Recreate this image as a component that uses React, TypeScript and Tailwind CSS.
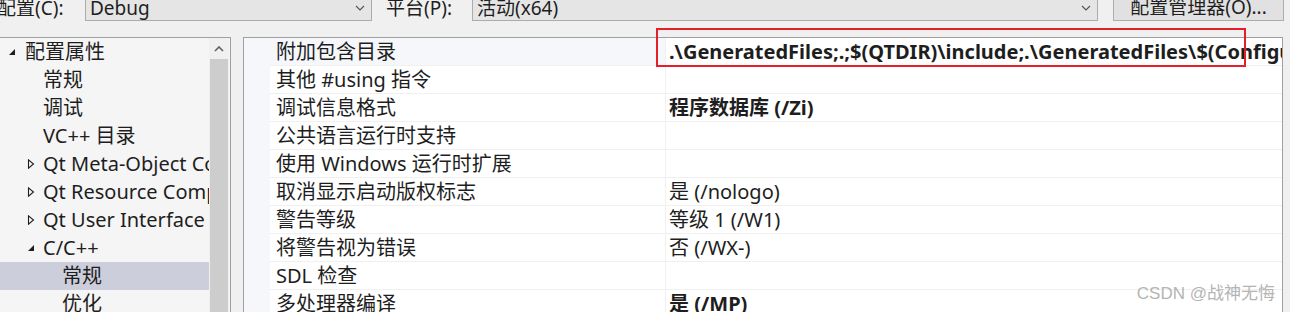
import React from "react";

type TreeItem = {
  label: string;
  level: number;
  arrow?: "open" | "closed";
  selected?: boolean;
};

const treeItems: TreeItem[] = [
  { label: "配置属性", level: 0, arrow: "open" },
  { label: "常规", level: 1 },
  { label: "调试", level: 1 },
  { label: "VC++ 目录", level: 1 },
  { label: "Qt Meta-Object Compiler", level: 1, arrow: "closed" },
  { label: "Qt Resource Compiler", level: 1, arrow: "closed" },
  { label: "Qt User Interface Compiler", level: 1, arrow: "closed" },
  { label: "C/C++", level: 1, arrow: "open" },
  { label: "常规", level: 2, selected: true },
  { label: "优化", level: 2 },
];

type PropRow = { name: string; value?: string; bold?: boolean; active?: boolean };

const propRows: PropRow[] = [
  {
    name: "附加包含目录",
    value: ".\\GeneratedFiles;.;$(QTDIR)\\include;.\\GeneratedFiles\\$(ConfigurationName);$(QTDIR)\\include\\QtCore",
    bold: true,
    active: true,
  },
  { name: "其他 #using 指令" },
  { name: "调试信息格式", value: "程序数据库 (/Zi)", bold: true },
  { name: "公共语言运行时支持" },
  { name: "使用 Windows 运行时扩展" },
  { name: "取消显示启动版权标志", value: "是 (/nologo)" },
  { name: "警告等级", value: "等级 1 (/W1)" },
  { name: "将警告视为错误", value: "否 (/WX-)" },
  { name: "SDL 检查" },
  { name: "多处理器编译", value: "是 (/MP)", bold: true },
];

function ChevronDown() {
  return (
    <svg width="10" height="6" viewBox="0 0 10 6" className="shrink-0">
      <polyline points="1,1 5,5 9,1" fill="none" stroke="#555" strokeWidth="1.2" />
    </svg>
  );
}

function Arrow({ kind }: { kind: "open" | "closed" }) {
  if (kind === "open") {
    return (
      <svg width="8" height="8" viewBox="0 0 8 8">
        <polygon points="7,1 7,7 1,7" fill="#1e1e1e" />
      </svg>
    );
  }
  return (
    <svg width="8" height="10" viewBox="0 0 8 10">
      <polygon points="1.5,0.8 6.5,5 1.5,9.2" fill="none" stroke="#1e1e1e" strokeWidth="1.1" />
    </svg>
  );
}

function ComboBox({ text, className }: { text: string; className: string }) {
  return (
    <div
      className={`flex h-[26px] items-center justify-between border border-[#acacac] bg-[#e5e5e5] pl-[4px] pr-[6px] ${className}`}
    >
      <span className="whitespace-nowrap leading-none">{text}</span>
      <ChevronDown />
    </div>
  );
}

function TreeRow({ item }: { item: TreeItem }) {
  // indent: level 0 text at 25px, level 1 at 43px, level 2 at 62px
  const textLeft = item.level === 0 ? "pl-[25px]" : item.level === 1 ? "pl-[43px]" : "pl-[62px]";
  const arrowLeft = item.level === 0 ? "left-[8px]" : "left-[27px]";
  return (
    <div
      className={`relative flex h-[28px] shrink-0 items-center overflow-hidden ${textLeft} ${
        item.selected ? "bg-[#cccedb]" : ""
      }`}
    >
      {item.arrow && (
        <span className={`absolute top-[9px] ${arrowLeft} flex h-[10px] items-center`}>
          <Arrow kind={item.arrow} />
        </span>
      )}
      <span className="min-w-0 overflow-hidden whitespace-nowrap">{item.label}</span>
    </div>
  );
}

function PropertyRow({ row }: { row: PropRow }) {
  return (
    <div className="flex h-[28px] shrink-0 border-b border-[#f0f0f0]">
      <div
        className={`flex w-[396px] shrink-0 items-center border-r border-[#f0f0f0] pl-[6px] ${
          row.active ? "bg-[#f5f7fb]" : "bg-white"
        }`}
      >
        <span className="whitespace-nowrap">{row.name}</span>
      </div>
      <div className="flex min-w-0 flex-1 items-center overflow-hidden pl-[3px]">
        {row.value && (
          <span className={`min-w-0 overflow-hidden whitespace-nowrap ${row.bold ? "font-bold" : ""}`}>
            {row.value}
          </span>
        )}
      </div>
    </div>
  );
}

export default function App() {
  return (
    <div
      className="relative h-[312px] w-[1290px] overflow-hidden bg-[#f0f0f0] text-[20px] text-[#1e1e1e]"
      style={{ fontFamily: '"Noto Sans", "Noto Sans CJK SC", sans-serif' }}
    >
      {/* top bar: configuration / platform / manager button */}
      <div className="flex h-[37px] items-end pb-[16px] text-[19px]">
        <span className="-ml-[3px] w-[88px] shrink-0 whitespace-nowrap leading-[26px]">配置(C):</span>
        <ComboBox text="Debug" className="w-[287px] shrink-0" />
        <span className="ml-[14px] w-[86px] shrink-0 whitespace-nowrap leading-[26px]">平台(P):</span>
        <ComboBox text="活动(x64)" className="w-[626px] shrink-0" />
        <div className="ml-[15px] flex h-[27px] w-[171px] shrink-0 items-center justify-center border border-[#adadad] bg-[#e1e1e1]">
          <span className="whitespace-nowrap leading-none">配置管理器(O)...</span>
        </div>
      </div>

      <div className="flex h-[275px]">
        {/* left tree panel */}
        <div className="-ml-[1px] flex h-[290px] w-[232px] shrink-0 border border-[#a0a0a0] bg-[#f5f5f5]">
          <div className="flex min-w-0 flex-1 flex-col overflow-hidden">
            {treeItems.map((item, i) => (
              <TreeRow key={i} item={item} />
            ))}
          </div>
          <div className="mr-[1px] flex w-[20px] shrink-0 flex-col bg-[#f0f0f0]">
            <div className="flex h-[21px] items-center justify-center">
              <svg width="10" height="6" viewBox="0 0 10 6">
                <polyline points="1,5 5,1 9,5" fill="none" stroke="#606060" strokeWidth="1.6" />
              </svg>
            </div>
            <div className="mx-[1px] flex-1 bg-[#cdcdcd]" />
          </div>
        </div>

        {/* right property grid */}
        <div className="ml-[12px] flex h-[290px] w-[1040px] shrink-0 border border-[#a0a0a0] bg-white">
          <div className="w-[26px] shrink-0 bg-[#f5f7fb]" />
          <div className="flex min-w-0 flex-1 flex-col overflow-hidden">
            {propRows.map((row, i) => (
              <PropertyRow key={i} row={row} />
            ))}
          </div>
        </div>
      </div>

      {/* red annotation box drawn over the screenshot */}
      <div className="absolute left-[656px] top-[28px] h-[39px] w-[590px] border-2 border-[#e51f2a]" />

      {/* watermark */}
      <div
        className="absolute right-[15px] top-[281px] whitespace-nowrap text-[17px] text-[#b4b4b4]"
        style={{ fontFamily: '"Liberation Sans", "Noto Sans CJK SC", sans-serif' }}
      >
        CSDN @战神无悔
      </div>
    </div>
  );
}
